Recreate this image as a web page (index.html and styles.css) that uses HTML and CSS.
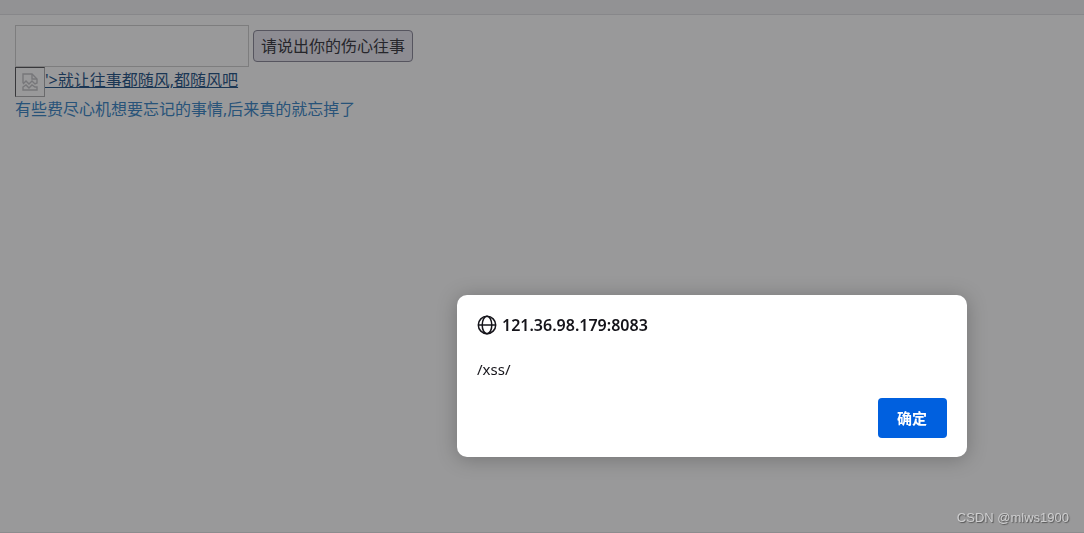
FILE: index.html
```
<!DOCTYPE html>
<html lang="zh-CN">
	<head>
		<meta charset="UTF-8" />
		<meta name="viewport" content="width=device-width, initial-scale=1.0" />
		<title>xss</title>
		<link rel="stylesheet" href="styles.css">
	</head>
	<body>
		<div class="toolbar"></div>
		<main class="page">
			<form class="search">
				<input class="search-text" type="text" aria-label="往事" />
				<button class="search-btn" type="button">请说出你的伤心往事</button>
			</form>
			<a class="result" href="#">
				<span class="broken-img">
					<svg viewBox="0 0 16 18" width="16" height="18" fill="none" stroke="#77777a" stroke-width="1.4">
						<path d="M1 10V1h9l5 5v4l-2 1-3-3-3 3-3-3-3 3" />
						<path d="M10 1v5h5" />
						<path d="M1 17v-3l3-2 3 3 3-3 3 2h2v3z" />
					</svg>
				</span>
				<span class="result-text">'&gt;就让往事都随风,都随风吧</span>
			</a>
			<p class="message">有些费尽心机想要忘记的事情,后来真的就忘掉了</p>
		</main>

		<div class="dialog" role="alertdialog" aria-labelledby="host" aria-describedby="info">
			<div class="dialog-title">
				<svg class="globe" viewBox="0 0 20 20" width="20" height="20" fill="none" stroke="#15141a" stroke-width="1.5">
					<circle cx="10" cy="10" r="8.7" />
					<ellipse cx="10" cy="10" rx="4.8" ry="8.7" />
					<path d="M1.3 10h17.4" />
				</svg>
				<span id="host">121.36.98.179:8083</span>
			</div>
			<p class="dialog-text" id="info">/xss/</p>
			<div class="dialog-buttons">
				<button class="ok" type="button">确定</button>
			</div>
		</div>
		<div class="watermark">CSDN @mlws1900</div>
	</body>
</html>
```
FILE: styles.css
```
* {
	box-sizing: border-box;
}
body {
	min-height: 100vh;
	margin: 0;
	background: #99999a;
	border-bottom: 1px solid #8c8c8e;
	font-family: "Noto Sans", "Noto Sans CJK SC", sans-serif;
	font-size: 16px;
}
.toolbar {
	height: 15px;
	background: #929294;
	border-bottom: 1px solid #87878a;
}
.page {
	padding: 10px 15px;
}
.search {
	display: flex;
	align-items: center;
	gap: 4px;
}
.search-text {
	width: 234px;
	height: 42px;
	padding: 0 8px;
	background: #99999a;
	border: 1px solid #7d7d7e;
	font: inherit;
}
.search-btn {
	height: 32px;
	padding: 0 7px 2px;
	background: #8d8c92;
	border: 1px solid #56555f;
	border-radius: 4px;
	color: #26262b;
	font-family: "Noto Sans CJK SC", sans-serif;
	font-size: 16px;
	line-height: 24px;
}
.result {
	display: flex;
	color: #1a3654;
}
.result-text {
	line-height: 27px;
	text-decoration: underline;
}
.broken-img {
	display: flex;
	align-items: center;
	justify-content: center;
	width: 30px;
	height: 30px;
	border: 1px solid;
	border-color: #38383b #6a6a6c #6a6a6c #38383b;
}
.message {
	margin: 0;
	color: #285379;
	line-height: 24px;
}

/* alert box over the page */
.dialog {
	position: fixed;
	right: 117px;
	bottom: 76px;
	width: 510px;
	padding: 19px 20px;
	background: #fff;
	border-radius: 10px;
	box-shadow: 0 2px 20px rgba(0, 0, 0, 0.25);
	color: #15141a;
	font-size: 15px;
}
.dialog-title {
	display: flex;
	align-items: center;
	gap: 5px;
	font-size: 16px;
	font-weight: 600;
	line-height: 22px;
}
.dialog-text {
	margin: 22px 0 18px;
	line-height: 22px;
}
.dialog-buttons {
	display: flex;
	justify-content: flex-end;
}
.ok {
	height: 40px;
	padding: 0 20px 2px 19px;
	background: #0060df;
	border: 0;
	border-radius: 4px;
	color: #fff;
	font-family: "Noto Sans CJK SC", sans-serif;
	font-size: 15px;
	font-weight: 700;
}
.watermark {
	position: fixed;
	right: 15px;
	bottom: 6px;
	color: #cfcfd0;
	font-family: "Liberation Sans", sans-serif;
	font-size: 13px;
	line-height: 18px;
	text-shadow: 1px 1px 1px #555;
}
```
